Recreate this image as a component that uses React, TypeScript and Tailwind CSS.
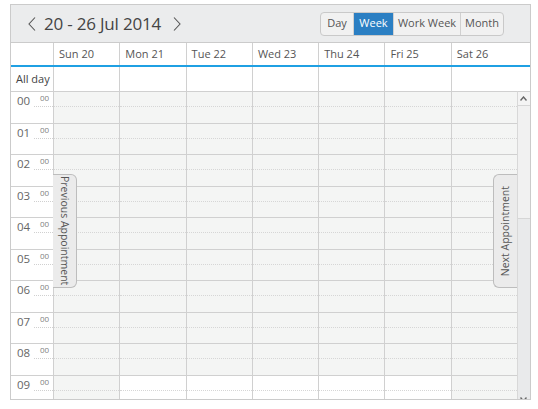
import React from "react";

const days = ["Sun 20", "Mon 21", "Tue 22", "Wed 23", "Thu 24", "Fri 25", "Sat 26"];
const hours = Array.from({ length: 10 }, (_, i) => String(i).padStart(2, "0"));
const views = ["Day", "Week", "Work Week", "Month"];

function Chevron({ dir }: { dir: "left" | "right" }) {
  return (
    <svg width="10" height="16" viewBox="0 0 10 16" className="text-[#555]">
      <polyline
        points={dir === "left" ? "8,1.5 2,8 8,14.5" : "2,1.5 8,8 2,14.5"}
        fill="none"
        stroke="currentColor"
        strokeWidth="1.1"
      />
    </svg>
  );
}

function DayColumn({ index }: { index: number }) {
  return (
    <div className="flex flex-col border-l border-[#d0d0d0]">
      {hours.map((h, i) => {
        const working = index >= 1 && index <= 5 && i >= 9 && i < 18;
        return (
          <div
            key={h}
            className={`h-[31.5px] shrink-0 border-t border-[#d0d0d0] flex flex-col ${
              working ? "bg-white" : "bg-[#f4f5f4]"
            }`}
          >
            <div className="h-[15px] border-b border-dotted border-[#d6d6d6]" />
          </div>
        );
      })}
    </div>
  );
}

export default function App() {
  return (
    <div className="w-[538px] h-[409px] bg-white pt-[4px] pl-[10px] font-['Open_Sans','Noto_Sans',sans-serif]">
      <div className="relative w-[521px] border border-[#cbcbcb] bg-white">
        {/* toolbar */}
        <div className="h-[38px] bg-[#ebeced] border-b border-[#cbcbcb] flex items-center pl-[16px] pr-[26px]">
          <Chevron dir="left" />
          <span className="ml-[7px] text-[17px] leading-none text-[#444] tracking-[-0.2px]">
            20 - 26 Jul 2014
          </span>
          <span className="ml-[11px]">
            <Chevron dir="right" />
          </span>
          <div className="ml-auto flex h-[24px] rounded-[4px] border border-[#c9c9c9] bg-[#f1f1f1] text-[11px] text-[#555] overflow-hidden">
            {views.map((v, i) => (
              <div
                key={v}
                className={`flex items-center justify-center ${
                  v === "Day" ? "w-[32px]" : v === "Week" ? "w-[40px]" : v === "Work Week" ? "w-[67px]" : "w-[43px]"
                } ${i > 0 ? "border-l border-[#d0d0d0]" : ""} ${
                  v === "Week" ? "bg-[#2b7fc3] text-white border-[#2b7fc3]" : ""
                }`}
              >
                {v}
              </div>
            ))}
          </div>
        </div>

        {/* date header */}
        <div className="grid grid-cols-[42px_repeat(6,66.3px)_1fr] h-[22px] text-[11px] text-[#555]">
          <div />
          {days.map((d) => (
            <div key={d} className="border-l border-[#d0d0d0] pl-[5px] flex items-center">
              {d}
            </div>
          ))}
        </div>
        <div className="h-[2px] bg-[#1fa0e3]" />
        <div className="grid grid-cols-[42px_repeat(6,66.3px)_1fr] h-[24px] text-[11px] text-[#444]">
          <div className="flex items-center pl-[5px]">All day</div>
          {days.map((d) => (
            <div key={d} className="border-l border-[#d0d0d0]" />
          ))}
        </div>

        {/* body */}
        <div className="relative grid grid-cols-[42px_repeat(7,minmax(0,1fr))_13px] h-[308px] overflow-hidden">
          <div className="flex flex-col">
            {hours.map((h) => (
              <div key={h} className="h-[31.5px] shrink-0 border-t border-[#d0d0d0] flex flex-col">
                <div className="h-[15px] flex">
                  <span className="pl-[6px] pt-[3px] text-[11.5px] leading-[12px] text-[#666] w-[23px]">{h}</span>
                  <div className="flex-1 border-b border-dotted border-[#d0d0d0]">
                    <span className="block pl-[6px] pt-[2px] text-[8px] leading-[8px] text-[#808080] [-webkit-font-smoothing:antialiased]">00</span>
                  </div>
                </div>
              </div>
            ))}
          </div>
          {days.map((d, i) => (
            <DayColumn key={d} index={i} />
          ))}
          {/* scrollbar */}
          <div className="flex flex-col border-l border-[#d8d8d8] border-t border-t-[#d0d0d0] bg-[#e9eaeb]">
            <div className="h-[13px] bg-[#f4f4f4] flex items-center justify-center">
              <svg width="7" height="5" viewBox="0 0 7 5">
                <polyline points="0.5,4.5 3.5,1 6.5,4.5" fill="none" stroke="#666" strokeWidth="1.4" />
              </svg>
            </div>
            <div className="h-[114px] bg-[#f1f1f1] border-y border-[#d6d6d6]" />
            <div className="flex-1" />
            <div className="h-[13px] flex items-center justify-center">
              <svg width="7" height="5" viewBox="0 0 7 5">
                <polyline points="0.5,0.5 3.5,4 6.5,0.5" fill="none" stroke="#666" strokeWidth="1.4" />
              </svg>
            </div>
          </div>

          <div className="absolute left-[42px] top-[83px] w-[24px] h-[114px] bg-[#ebebeb] border border-l-0 border-[#bdbdbd] rounded-r-[6px] flex items-center justify-center">
            <span className="[writing-mode:vertical-rl] text-[10.5px] text-[#555] whitespace-nowrap">
              Previous Appointment
            </span>
          </div>
          <div className="absolute right-[13px] top-[83px] w-[24px] h-[114px] bg-[#ebebeb] border border-r-0 border-[#bdbdbd] rounded-l-[6px] flex items-center justify-center">
            <span className="[writing-mode:vertical-rl] rotate-180 text-[10.5px] text-[#555] whitespace-nowrap">
              Next Appointment
            </span>
          </div>
        </div>
      </div>
    </div>
  );
}
